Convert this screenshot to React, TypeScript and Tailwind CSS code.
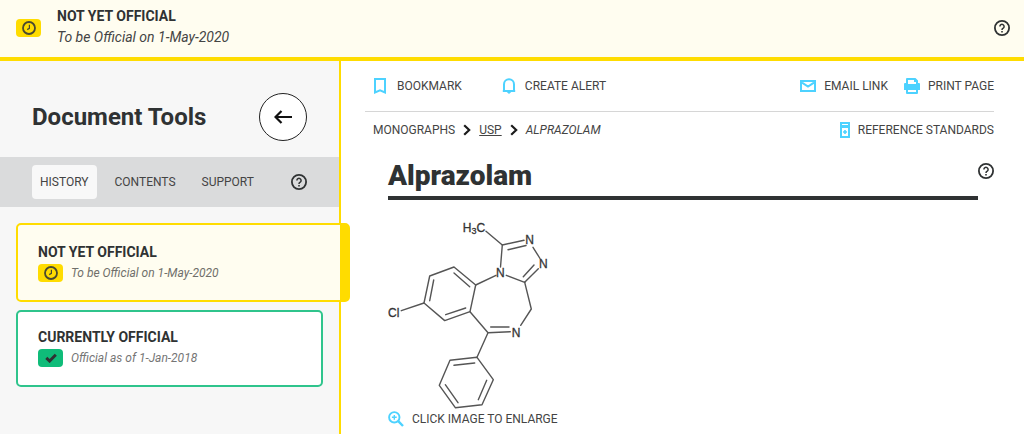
import type { ReactNode } from "react";

function HelpIcon() {
  return (
    <svg viewBox="0 0 16 16" className="size-4" fill="none" stroke="#2f3233" aria-hidden="true">
      <circle cx="8" cy="8" r="7.1" strokeWidth="1.8" />
      <path d="M5.9 6.5a2.1 2.1 0 1 1 3.3 1.7c-.8.5-1.2.8-1.2 1.7" strokeWidth="1.5" />
      <path d="M8 11v1.5" strokeWidth="1.6" />
    </svg>
  );
}

function HelpButton() {
  return (
    <button type="button" aria-label="Help" className="block size-4 shrink-0">
      <HelpIcon />
    </button>
  );
}

function ClockBadge() {
  return (
    <span className="flex h-[18px] w-[25px] shrink-0 items-center justify-center rounded bg-[#ffdc00]">
      <svg viewBox="0 0 14 14" className="size-[14px]" fill="none" stroke="#4a4a30" aria-hidden="true">
        <circle cx="7" cy="7" r="6" strokeWidth="1.8" />
        <path d="M7.4 3.8v3.6L5.2 8.6" strokeWidth="1.2" />
      </svg>
    </span>
  );
}

function CheckBadge() {
  return (
    <span className="flex h-[18px] w-[25px] shrink-0 items-center justify-center rounded bg-[#0fbc79]">
      <svg viewBox="0 0 12 10" className="h-[10px] w-3" fill="none" stroke="#2f3233" aria-hidden="true">
        <path d="M1.3 4.9 4.6 8.1 10.8 1.7" strokeWidth="2.9" />
      </svg>
    </span>
  );
}

function BookmarkIcon() {
  return (
    <svg viewBox="0 0 14 16" className="h-4 w-[14px]" fill="none" stroke="#4dd2ff" strokeWidth="2" aria-hidden="true">
      <path d="M2 1h10v13.4l-5-2.1-5 2.1z" />
    </svg>
  );
}

function BellIcon() {
  return (
    <svg viewBox="0 0 14 16" className="h-4 w-[14px]" fill="none" stroke="#4dd2ff" strokeWidth="2" aria-hidden="true">
      <path d="M2 13V6.3a5 5 0 0 1 10 0V13" />
      <path d="M.8 13h12.4" />
      <path d="M4.8 14h4.4L7 16z" fill="#4dd2ff" stroke="none" />
    </svg>
  );
}

function MailIcon() {
  return (
    <svg viewBox="0 0 16 12" className="h-3 w-4" fill="none" stroke="#4dd2ff" strokeWidth="2" aria-hidden="true">
      <path d="M1 1h14v10H1zM2 2.6l6 3.9 6-3.9" />
    </svg>
  );
}

function PrinterIcon() {
  return (
    <svg viewBox="0 0 16 16" className="size-4" aria-hidden="true">
      <path d="M2 1a1 1 0 0 1 1-1h8.500L14 2.500V5h1a1 1 0 0 1 1 1v6h-2v3a1 1 0 0 1-1 1H3a1 1 0 0 1-1-1v-3H0V6a1 1 0 0 1 1-1h1z" fill="#4dd2ff" />
      <path d="M4 2h6v2h2v2H4zM4 12h8v2H4z" fill="#fff" />
    </svg>
  );
}

function VialIcon() {
  return (
    <svg viewBox="0 0 10 16" className="h-4 w-[10px]" aria-hidden="true">
      <path d="M0 0h10v16H0z" fill="#4dd2ff" />
      <path d="M2 2h6v1H2zM2 6h6v8H2z" fill="#fff" />
      <path d="M4.2 8h1.6v1.2H7v1.6H5.8V12H4.2v-1.2H3V9.2h1.2z" fill="#4dd2ff" />
    </svg>
  );
}

function ZoomInIcon() {
  return (
    <svg viewBox="0 0 16 16" className="size-4" fill="none" stroke="#4dd2ff" aria-hidden="true">
      <circle cx="6.3" cy="6.3" r="5.2" strokeWidth="1.9" />
      <path d="m10.2 10.2 4.8 4.8" strokeWidth="2.4" />
      <path d="M6.3 3.9v4.8M3.9 6.3h4.8" strokeWidth="1.4" />
    </svg>
  );
}

function Chevron() {
  return (
    <svg viewBox="0 0 8 12" className="h-3 w-2 shrink-0" fill="none" stroke="#1b1b1b" strokeWidth="2.2" aria-hidden="true">
      <path d="m1.2 1.2 5 4.8-5 4.8" />
    </svg>
  );
}

function Molecule() {
  return (
    <svg
      viewBox="388 216 162 194"
      className="block h-[194px] w-[162px]"
      role="img"
      aria-label="Structural formula of alprazolam"
    >
      <g fill="none" stroke="#555" strokeWidth="1.4" strokeLinecap="round" strokeLinejoin="round">
        <path d="M486 231.3 502.300 245 524 240.300M508 249.700 526 245.500" />
        <path d="M533 247.300 540 258.500M538.300 268.700 524.700 282.300M534 265 523.300 276.700" />
        <path d="M502.300 245 500.500 267M506.300 275.300 524.700 282.300M496 275.300 475.700 285" />
        <path d="M475.700 285 454 267 429.700 276 424 303 444.700 320.600 470 311.700z" />
        <path d="M454 273 469.700 286.700M433.700 280 429.700 300.700M445.700 314.700 465.700 308" />
        <path d="M424 303 401.300 310.700M524.700 282.300 531.300 309 520.700 325.300" />
        <path d="M470 311.700 488 332.700 510.300 331.700M490.700 327 509 327M488 332.700 477 357.300" />
        <path d="M477 357.300 493.300 379.700 482 404.700 455.300 407.700 439.300 385.300 450 360.300z" />
        <path d="M454 365.300 474.700 363M486.700 380.300 478.300 399.700M458 402.700 445.300 384.700" />
      </g>
      <g
        className="font-['Liberation_Sans',sans-serif] text-[12px]"
        fill="#333"
        stroke="#333"
        strokeWidth="0.3"
        textAnchor="middle"
      >
        <text x="474" y="232">
          H<tspan fontSize="9" dy="2">3</tspan><tspan dy="-2">C</tspan>
        </text>
        <text x="529.5" y="244">N</text>
        <text x="543.3" y="268">N</text>
        <text x="500.3" y="277">N</text>
        <text x="516" y="337">N</text>
        <text x="393.7" y="317">Cl</text>
      </g>
    </svg>
  );
}

function Tool({ icon, children }: { icon: ReactNode; children: ReactNode }) {
  return (
    <button type="button" className="flex items-center gap-2 whitespace-nowrap">
      {icon}
      {children}
    </button>
  );
}

function Sidebar() {
  return (
    <aside className="w-[341px] shrink-0 border-r-2 border-[#ffdc00] bg-[#f7f7f7]">
      <div className="flex h-24 items-center justify-between px-8 pt-4">
        <h2 className="text-2xl font-bold">Document Tools</h2>
        <button
          type="button"
          aria-label="Collapse document tools"
          className="flex size-12 items-center justify-center rounded-full border border-[#222] bg-white"
        >
          <svg viewBox="0 0 18 14" className="h-[14px] w-[18px]" fill="none" stroke="#111" strokeWidth="2.2" aria-hidden="true">
            <path d="M18 7H2M7.500 1 1.500 7l6 6" />
          </svg>
        </button>
      </div>
      <nav className="flex h-[50px] items-center bg-[#dadbdc] px-8 text-[12px] text-[#444]">
        <button type="button" className="h-[34px] rounded bg-[#f8f8f8] px-2">
          HISTORY
        </button>
        <button type="button" className="ml-[18px]">
          CONTENTS
        </button>
        <button type="button" className="mr-auto ml-[26px]">
          SUPPORT
        </button>
        <HelpButton />
      </nav>
      <div className="flex flex-col gap-2 pt-4 pl-4">
        <a
          href="#not-yet-official"
          className="relative mr-[-11px] block rounded-[5px] border-2 border-r-[10px] border-[#ffdc00] bg-[#fffdf0] px-5 pt-4 pb-[17px]"
        >
          <strong className="block text-[14px] leading-[22px] font-bold">NOT YET OFFICIAL</strong>
          <span className="flex h-5 items-center gap-2 text-[12px] text-[#6f6f6a] italic">
            <ClockBadge />
            To be Official on 1-May-2020
          </span>
        </a>
        <a
          href="#currently-official"
          className="mr-4 block rounded-[5px] border-2 border-[#2fc48c] bg-white px-5 pt-[14px] pb-[17px]"
        >
          <strong className="block text-[14px] leading-[22px] font-bold">CURRENTLY OFFICIAL</strong>
          <span className="flex h-5 items-center gap-2 text-[12px] text-[#757575] italic">
            <CheckBadge />
            Official as of 1-Jan-2018
          </span>
        </a>
      </div>
    </aside>
  );
}

export default function App() {
  return (
    <div className="flex min-h-screen flex-col bg-white font-[Roboto,sans-serif] text-[#2f3233]">
      <header className="flex h-[61px] items-center border-b-4 border-[#ffdc00] bg-[#fffdf0] pr-[14px] pb-0.5 pl-4">
        <ClockBadge />
        <div className="mr-auto ml-4 pb-0.5 text-[14px]">
          <p className="leading-[21px] font-bold">NOT YET OFFICIAL</p>
          <p className="leading-[21px] text-[#444] italic">To be Official on 1-May-2020</p>
        </div>
        <HelpButton />
      </header>
      <div className="flex flex-1">
        <Sidebar />
        <main className="min-w-0 flex-1 pr-[30px] pl-6 text-[12px] text-[#444]">
          <div className="flex h-[51px] items-center justify-between border-b border-[#d6d6d6] pl-2">
            <div className="flex gap-10">
              <button type="button" className="flex items-center gap-[10px]">
                <BookmarkIcon />
                BOOKMARK
              </button>
              <button type="button" className="flex items-center gap-[9px]">
                <BellIcon />
                CREATE ALERT
              </button>
            </div>
            <div className="flex gap-4">
              <Tool icon={<MailIcon />}>EMAIL LINK</Tool>
              <Tool icon={<PrinterIcon />}>PRINT PAGE</Tool>
            </div>
          </div>
          <div className="flex h-9 items-center justify-between pl-2">
            <nav aria-label="Breadcrumb" className="flex items-center gap-2">
              <span>MONOGRAPHS</span>
              <Chevron />
              <a href="#usp" className="underline">
                USP
              </a>
              <Chevron />
              <span className="italic">ALPRAZOLAM</span>
            </nav>
            <Tool icon={<VialIcon />}>REFERENCE STANDARDS</Tool>
          </div>
          <div className="flex items-center pt-3 pl-[23px]">
            <h1 className="h-10 flex-1 border-b-4 border-[#2f3233] text-[28px] leading-8 font-black text-[#2f3233]">
              Alprazolam
            </h1>
            <div className="pb-[18px]">
              <HelpButton />
            </div>
          </div>
          <button type="button" className="mt-4 ml-[23px] block cursor-zoom-in text-left">
            <Molecule />
            <span className="flex items-center gap-2">
              <ZoomInIcon />
              CLICK IMAGE TO ENLARGE
            </span>
          </button>
        </main>
      </div>
    </div>
  );
}
